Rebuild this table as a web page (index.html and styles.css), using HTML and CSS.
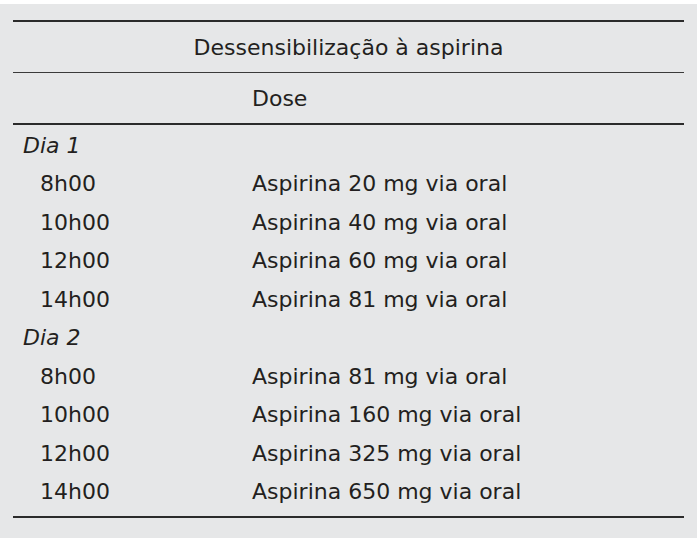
FILE: index.html
```html
<!DOCTYPE html>
<html lang="pt">
<head>
<meta charset="utf-8">
<link rel="stylesheet" href="styles.css">
</head>
<body>
<div class="page">
  <div class="table">
    <div class="title">Dessensibilização à aspirina</div>
    <div class="head"><span class="c1"></span><span class="c2">Dose</span></div>
    <div class="body">
      <div class="row group"><span class="c1">Dia 1</span><span class="c2"></span></div>
      <div class="row"><span class="c1 t">8h00</span><span class="c2">Aspirina 20 mg via oral</span></div>
      <div class="row"><span class="c1 t">10h00</span><span class="c2">Aspirina 40 mg via oral</span></div>
      <div class="row"><span class="c1 t">12h00</span><span class="c2">Aspirina 60 mg via oral</span></div>
      <div class="row"><span class="c1 t">14h00</span><span class="c2">Aspirina 81 mg via oral</span></div>
      <div class="row group"><span class="c1">Dia 2</span><span class="c2"></span></div>
      <div class="row"><span class="c1 t">8h00</span><span class="c2">Aspirina 81 mg via oral</span></div>
      <div class="row"><span class="c1 t">10h00</span><span class="c2">Aspirina 160 mg via oral</span></div>
      <div class="row"><span class="c1 t">12h00</span><span class="c2">Aspirina 325 mg via oral</span></div>
      <div class="row"><span class="c1 t">14h00</span><span class="c2">Aspirina 650 mg via oral</span></div>
    </div>
  </div>
</div>
</body>
</html>
```
FILE: styles.css
```css
html, body {
  margin: 0;
  padding: 0;
  background: #ffffff;
}
.page {
  margin-top: 4px;
  width: 697px;
  height: 534px;
  background: #e6e7e8;
  padding: 16px 13px 0 13px;
  box-sizing: border-box;
  font-family: "DejaVu Sans", sans-serif;
  font-size: 22px;
  color: #231f20;
}
.table {
  width: 671px;
  border-top: 2px solid #2b2b2b;
  border-bottom: 2px solid #2b2b2b;
}
.title {
  height: 50px;
  display: flex;
  align-items: center;
  justify-content: center;
  border-bottom: 1px solid #3a3a3a;
}
.head {
  height: 50px;
  display: flex;
  align-items: center;
  border-bottom: 2px solid #2b2b2b;
}
.body {
  padding: 1px 0 5px 0;
}
.row {
  display: flex;
  align-items: center;
  height: 38.5px;
}
.c1 {
  width: 239px;
  padding-left: 10px;
  box-sizing: border-box;
}
.c1.t {
  padding-left: 27px;
}
.group .c1 {
  font-style: italic;
}
```
